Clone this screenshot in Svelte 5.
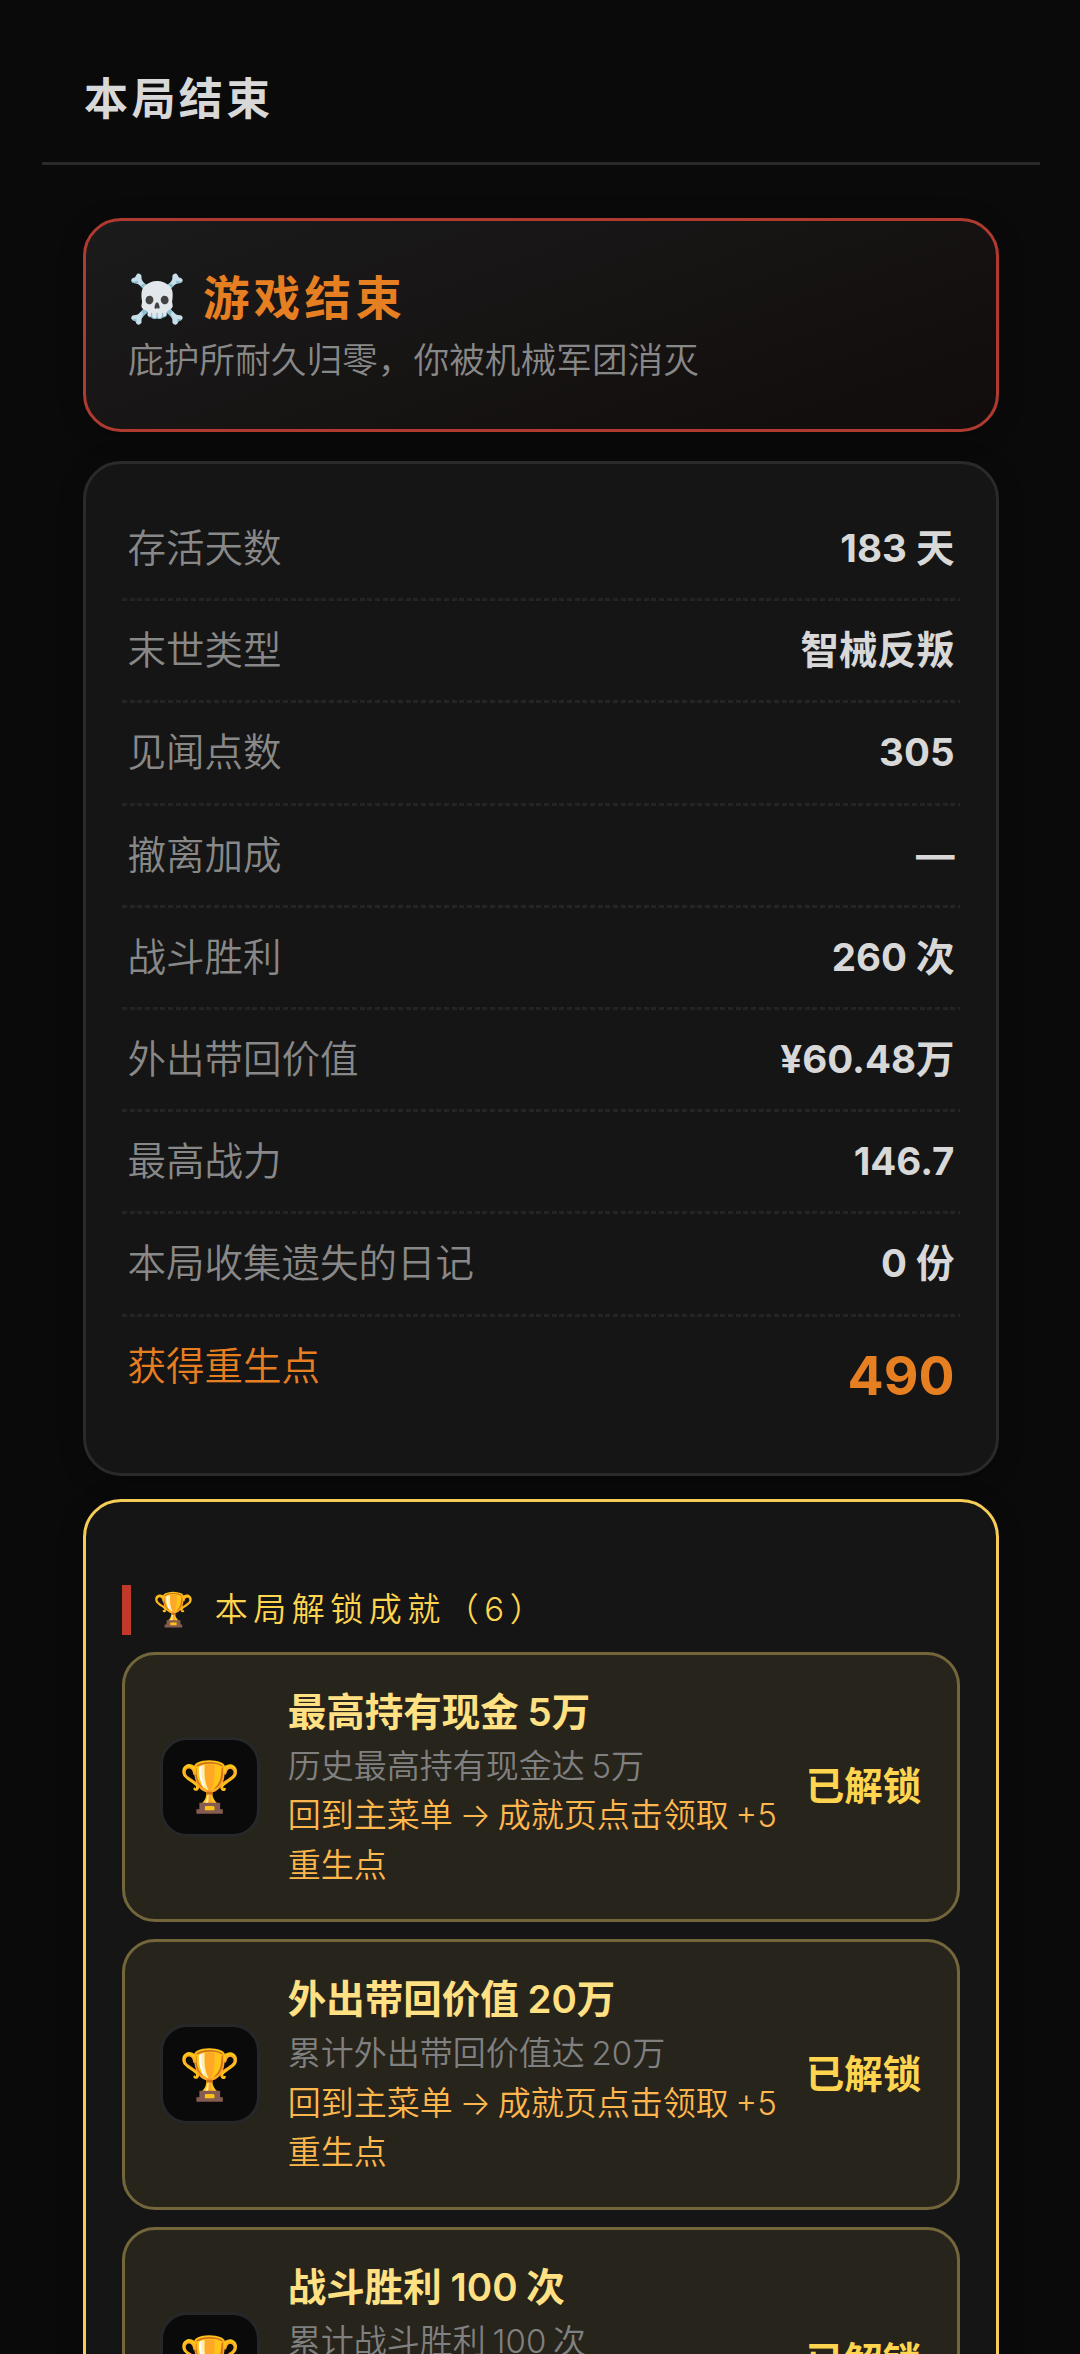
<script>
  const stats = [
    { label: '存活天数', value: '183 天' },
    { label: '末世类型', value: '智械反叛' },
    { label: '见闻点数', value: '305' },
    { label: '撤离加成', value: '—' },
    { label: '战斗胜利', value: '260 次' },
    { label: '外出带回价值', value: '¥60.48万' },
    { label: '最高战力', value: '146.7' },
    { label: '本局收集遗失的日记', value: '0 份' },
  ];
  const points = 490;
  const unlockedTotal = 6;

  const achievements = [
    { icon: '🏆', name: '最高持有现金 5万', desc: '历史最高持有现金达 5万', reward: 5 },
    { icon: '🏆', name: '外出带回价值 20万', desc: '累计外出带回价值达 20万', reward: 5 },
    { icon: '🏆', name: '战斗胜利 100 次', desc: '累计战斗胜利 100 次', reward: 5 },
  ];
</script>

<div class="page">
  <header>
    <h1>本局结束</h1>
  </header>

  <main>
    <section class="card banner">
      <h2>☠️ 游戏结束</h2>
      <p>庇护所耐久归零，你被机械军团消灭</p>
    </section>

    <section class="card stats">
      {#each stats as row}
        <div class="row">
          <span class="label">{row.label}</span>
          <span class="value">{row.value}</span>
        </div>
      {/each}
      <div class="row total">
        <span class="label">获得重生点</span>
        <span class="value">{points}</span>
      </div>
    </section>

    <section class="card unlocked">
      <h3>🏆 本局解锁成就（{unlockedTotal}）</h3>
      {#each achievements as item}
        <div class="item">
          <div class="icon">{item.icon}</div>
          <div class="info">
            <div class="name">{item.name}</div>
            <div class="desc">{item.desc}</div>
            <div class="reward">回到主菜单 → 成就页点击领取 +{item.reward} 重生点</div>
          </div>
          <div class="badge">已解锁</div>
        </div>
      {/each}
    </section>
  </main>
</div>

<style>
  :global(body) {
    margin: 0;
    background: #0a0a0a;
  }
  .page {
    box-sizing: border-box;
    width: 1080px;
    height: 2354px;
    overflow: hidden;
    padding: 0 40px 0 42px;
    background: #0a0a0a;
    color: #d8d8d8;
    font-family: Inter, 'Noto Sans CJK SC', 'Noto Color Emoji', sans-serif;
    font-size: 38.5px;
  }
  h1, h2, h3, p {
    margin: 0;
  }
  header {
    box-sizing: border-box;
    height: 165px;
    padding: 66px 42px 0;
    border-bottom: 3px solid #2a2a2a;
  }
  h1 {
    font-size: 44px;
    line-height: 66px;
    font-weight: 700;
    letter-spacing: 3.4px;
  }
  main {
    padding: 53px 41.5px 0 41px;
  }
  .card {
    box-sizing: border-box;
    border: 3px solid #2a2a2a;
    border-radius: 38px;
    background: #151515;
    box-shadow: 0 4px 24px rgba(0, 0, 0, 0.25);
  }
  .banner {
    height: 214px;
    padding: 42px 42px 0;
    border-color: #b03a30;
    background: linear-gradient(160deg, #1b1b1b, #120c0c);
  }
  h2 {
    font-size: 46.5px;
    line-height: 70px;
    font-weight: 700;
    letter-spacing: 4.3px;
    word-spacing: -2.5px;
    color: #e67e22;
    white-space: nowrap;
  }
  .banner p {
    font-size: 35.7px;
    line-height: 54px;
    font-weight: 350;
    color: #888;
  }

  .stats {
    margin-top: 29px;
    padding: 35px 35.5px 33px;
  }
  .row {
    display: flex;
    justify-content: space-between;
    padding: 22px 5.5px 22px 6px;
    line-height: 55.2px;
    /* dashed divider, drawn as a tiled strip for an even rhythm */
    border-bottom: 3px solid transparent;
    background: repeating-linear-gradient(90deg, #242424 0 5px, transparent 5px 7.67px) left bottom / 100% 3px no-repeat border-box;
  }
  .label {
    color: #888;
    font-weight: 350;
  }
  .value {
    font-weight: 700;
  }
  .total {
    border-bottom: 0;
    background: none;
  }
  .total .label {
    color: #e67e22;
  }
  .total .value {
    margin: -3px 0 3px;
    font-size: 53.5px;
    line-height: 79px;
    color: #e67e22;
  }

  .unlocked {
    margin-top: 23px;
    height: 1400px;
    padding: 83px 35.5px 0;
    border-color: #f5cc57;
  }
  h3 {
    height: 50px;
    margin-bottom: 17px;
    padding-left: 23px;
    border-left: 9px solid #c0392b;
    font-size: 33px;
    line-height: 48px;
    font-weight: 350;
    letter-spacing: 5.5px;
    color: #ffd54f;
    white-space: nowrap;
  }
  .item {
    box-sizing: border-box;
    display: flex;
    align-items: center;
    gap: 27.5px;
    height: 270.5px;
    margin-bottom: 17px;
    padding: 0 35.75px;
    border: 3px solid #73663a;
    border-radius: 33px;
    background: #27241c;
  }
  .icon {
    box-sizing: border-box;
    flex: none;
    display: flex;
    align-items: center;
    justify-content: center;
    width: 100px;
    height: 100px;
    border: 3px solid #262728;
    border-radius: 27px;
    background: #0a0a0a;
    font-size: 49.5px;
    line-height: 1;
  }
  .info {
    flex: 1;
    min-width: 0;
  }
  .name {
    line-height: 57.75px;
    font-weight: 600;
    word-spacing: -1px;
    color: #ffe082;
  }
  .desc,
  .reward {
    font-size: 33px;
    line-height: 49.5px;
    font-weight: 350;
    word-spacing: -2.5px;
  }
  .desc {
    color: #808080;
  }
  .reward {
    color: #ffb74d;
  }
  .badge {
    flex: none;
    padding-bottom: 7px;
    font-weight: 700;
    color: #ffd54f;
  }
</style>
